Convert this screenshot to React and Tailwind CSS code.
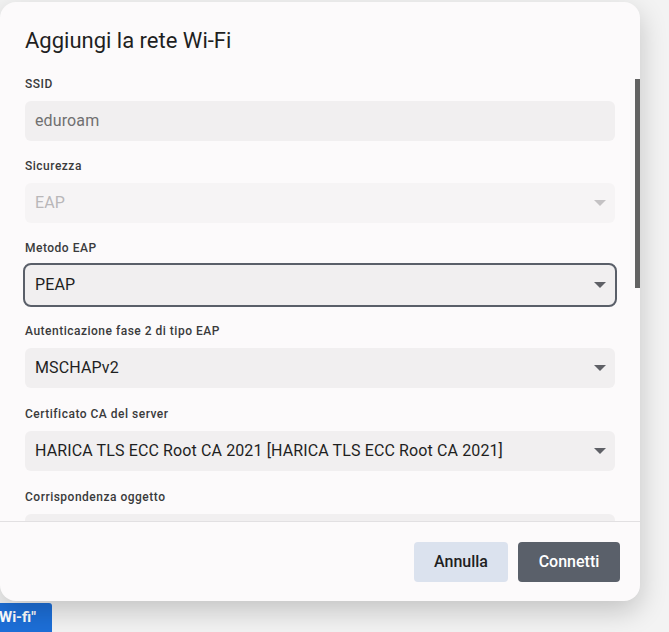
const font = { fontFamily: "Roboto, 'Noto Sans', sans-serif" };

function Arrow({ disabled = false }) {
  return (
    <svg width="12" height="6" viewBox="0 0 12 6" className="shrink-0">
      <path d="M0 0h12L6 6z" fill={disabled ? "#c4c2c4" : "#5f6066"} />
    </svg>
  );
}

function Label({ children, className = "" }) {
  return (
    <div className={`h-4 text-[12px] leading-4 font-medium tracking-[0.5px] text-[#3a3a3c] ${className}`}>
      {children}
    </div>
  );
}

function Field({ value, select = false, disabled = false, muted = false, focused = false }) {
  const base = focused
    ? "-mx-[2px] -my-[2px] h-[44px] rounded-[8px] border-2 border-[#5a5f69] bg-[#f1eff0] pl-[10px] pr-[9px]"
    : disabled
      ? "h-10 rounded-[6px] bg-[#f6f4f5] pl-[10px] pr-[9px]"
      : "h-10 rounded-[6px] bg-[#f1eff0] pl-[10px] pr-[9px]";
  const text = disabled ? "text-[#b9b7b9]" : muted ? "text-[#707070]" : "text-[#1f1f1f]";

  return (
    <div className={`flex items-center justify-between ${base}`}>
      <span className={`text-[16px] leading-5 tracking-[0.12px] ${text}`}>{value}</span>
      {select ? <Arrow disabled={disabled} /> : null}
    </div>
  );
}

export default function App() {
  return (
    <div className="relative h-[632px] w-[669px] overflow-hidden bg-[#f3f3f3]" style={font}>
      <div className="pt-[2px]">
        <div className="relative flex h-[599px] w-[640px] flex-col overflow-hidden rounded-[16px] bg-[#fcfafb] shadow-[0_10px_28px_rgba(0,0,0,0.2)]">
          <div className="h-[519px] overflow-hidden px-[25px] pt-[25px]">
            <h1 className="h-7 text-[22px] leading-7 font-normal text-[#1f1f1f]">
              Aggiungi la rete Wi-Fi
            </h1>

            <Label className="mt-[21px]">SSID</Label>
            <div className="mt-[9px]">
              <Field value="eduroam" muted />
            </div>

            <Label className="mt-[17px]">Sicurezza</Label>
            <div className="mt-[9px]">
              <Field value="EAP" select disabled />
            </div>

            <Label className="mt-[17px]">Metodo EAP</Label>
            <div className="mt-[9px]">
              <Field value="PEAP" select focused />
            </div>

            <Label className="mt-[18px]">Autenticazione fase 2 di tipo EAP</Label>
            <div className="mt-[9px]">
              <Field value="MSCHAPv2" select />
            </div>

            <Label className="mt-[18px]">Certificato CA del server</Label>
            <div className="mt-[9px]">
              <Field value="HARICA TLS ECC Root CA 2021 [HARICA TLS ECC Root CA 2021]" select />
            </div>

            <Label className="mt-[18px]">Corrispondenza oggetto</Label>
            <div className="mt-[9px]">
              <Field value="" />
            </div>
          </div>

          <div className="border-t border-[#e2e0e2] px-5 pt-5">
            <div className="flex justify-end gap-[10px]">
              <button className="h-10 w-[94px] rounded-[4px] bg-[#dbe2ee] text-[16px] font-medium text-[#1f1f1f]">
                Annulla
              </button>
              <button className="h-10 w-[102px] rounded-[4px] bg-[#5a606a] text-[16px] font-medium text-white">
                Connetti
              </button>
            </div>
          </div>

          <div className="absolute top-[77px] right-0 h-[209px] w-[5px] bg-[#636363]" />
        </div>

        <div className="mt-[2px] flex h-[29px] w-[52px] items-center rounded-tr-[3px] bg-[#1d6fd8] text-[15px] font-bold whitespace-nowrap text-white">
          <span className="-ml-px">Wi-fi"</span>
        </div>
      </div>
    </div>
  );
}
